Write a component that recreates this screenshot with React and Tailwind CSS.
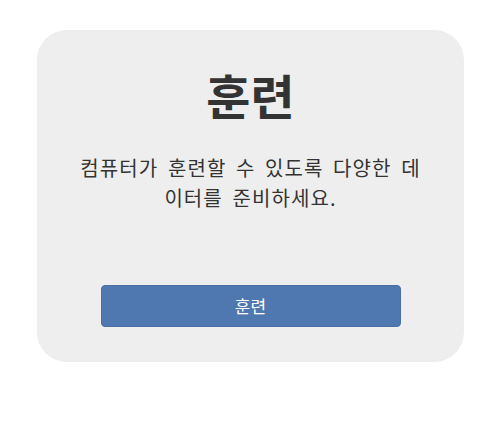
export default function App() {
  return (
    <div className="min-h-[427px] bg-white" style={{ fontFamily: '"Noto Sans CJK KR", "Noto Sans", sans-serif' }}>
      <div className="pt-[30px] pl-[37px]">
        <div className="w-[427px] h-[332px] rounded-[30px] bg-[#eeeeee] flex flex-col items-center pt-[36px]">
          <h1 className="text-[48px] leading-[56px] font-bold text-[#333333]">훈련</h1>
          <p className="mt-[31px] text-[20px] leading-[30px] tracking-[1.1px] [word-spacing:4px] text-[#333333] text-center">
            컴퓨터가 훈련할 수 있도록 다양한 데<br />이터를 준비하세요.
          </p>
          <button className="mt-auto mb-[35px] w-[300px] h-[42px] rounded-[4px] bg-[#5078b0] border border-[#4a6fa5] text-white text-[17px]">
            훈련
          </button>
        </div>
      </div>
    </div>
  );
}
